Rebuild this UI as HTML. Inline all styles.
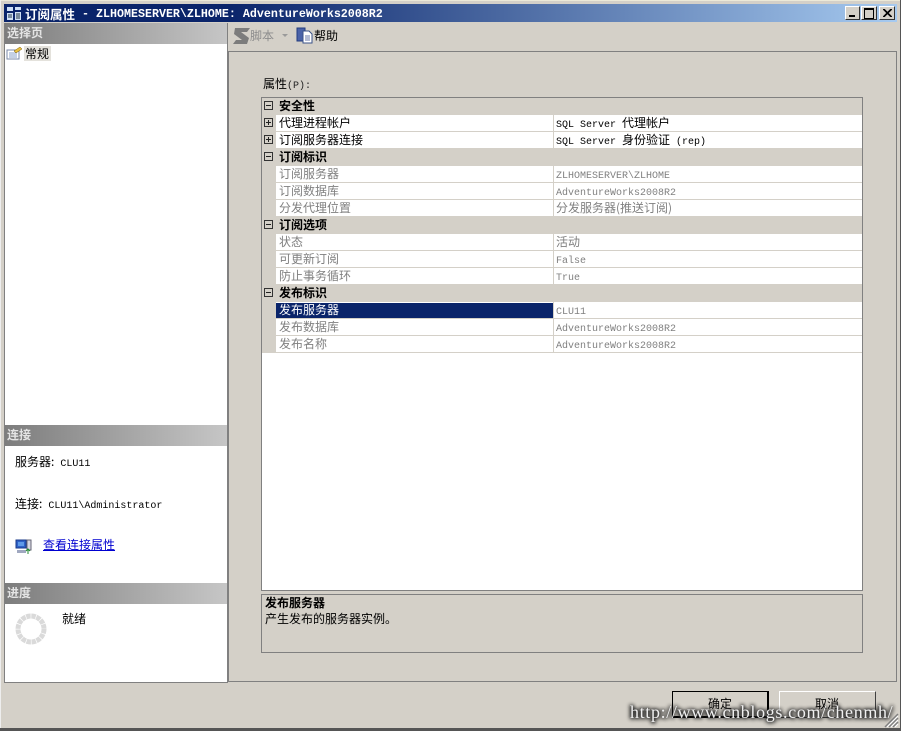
<!DOCTYPE html>
<html><head><meta charset="utf-8">
<style>
html,body{margin:0;padding:0}
body{width:901px;height:731px;position:relative;overflow:hidden;background:#d4d0c8;font:12px/14px "WenQuanYi Zen Hei","Noto Sans CJK SC",sans-serif;color:#000}
div,span.a,a.a{position:absolute;white-space:nowrap}
i{font:normal 10px/14px "Liberation Mono",monospace;white-space:pre}
.hd{left:5px;width:222px;height:21px;background:linear-gradient(90deg,#7d7d7d,#c6c6c6);color:#e4e4e4;font-weight:bold;line-height:20px;padding-left:2px;box-sizing:border-box}
.sec{left:262px;width:600px;height:17px;background:#d4d0c8;font-weight:bold;line-height:16px;padding-left:17px;box-sizing:border-box}
.row{left:262px;width:600px;height:17px;background:#fff}
.gut{left:0;top:0;width:14px;height:17px;background:#d4d0c8}
.n{left:17px;top:0;line-height:16px}
.v{left:294px;top:0;line-height:16px}
.hl{left:14px;top:16px;width:586px;height:1px;background:#d4d0c8}
.vl{left:291px;top:0;width:1px;height:17px;background:#d4d0c8}
.g{color:#808080}
.box{left:2px;top:3px;width:7px;height:7px;border:1px solid #333;box-sizing:content-box;background:transparent}
.box:before{content:"";position:absolute;left:1px;top:3px;width:5px;height:1px;background:#222}
.plus:after{content:"";position:absolute;left:3px;top:1px;width:1px;height:5px;background:#222}
</style></head><body>
<!-- window frame -->
<div style="left:0;top:0;width:901px;height:1px;background:#ece9d8"></div>
<div style="left:0;top:0;width:1px;height:731px;background:#eee"></div>
<div style="left:900px;top:0;width:1px;height:731px;background:#555"></div>
<div style="left:0;top:728px;width:901px;height:3px;background:#555"></div>
<!-- title bar -->
<div style="left:4px;top:4px;width:893px;height:18px;background:linear-gradient(90deg,#0a246a 0,#0a246a 25%,#a6caf0 100%)"></div>
<svg style="position:absolute;left:6px;top:6px" width="16" height="15"><path d="M1 1h6v4H1zM9 1h6v3H9zM1 7h6v7H1zM9 6h6v8H9z" fill="#cfe0f5"/><path d="M2 9h4M2 11h4M10 8h4M10 10h4M10 12h4" stroke="#234" stroke-width="1"/></svg>
<div style="left:25px;top:7px;color:#fff;font-weight:bold;font-size:12.5px;line-height:14px">订阅属性</div>
<div style="left:82px;top:7px;color:#fff;font:bold 11.67px/14px 'Liberation Mono',monospace">- ZLHOMESERVER\ZLHOME: AdventureWorks2008R2</div>
<div style="left:845px;top:6px;width:15px;height:14px;background:#d4d0c8;border:1px solid;border-color:#fff #333 #333 #fff;box-sizing:border-box"><div style="left:3px;top:8px;width:6px;height:2px;background:#000"></div></div>
<div style="left:861px;top:6px;width:16px;height:14px;background:#d4d0c8;border:1px solid;border-color:#fff #333 #333 #fff;box-sizing:border-box"><div style="left:2px;top:1px;width:8px;height:8px;border:1px solid #000;border-top-width:2px"></div></div>
<div style="left:879px;top:6px;width:16px;height:14px;background:#d4d0c8;border:1px solid;border-color:#fff #333 #333 #fff;box-sizing:border-box"><svg style="position:absolute;left:3px;top:2px" width="9" height="8"><path d="M0 0l8 8M1 0l8 8M8 0L0 8M9 0L1 8" stroke="#000" stroke-width="1"/></svg></div>

<!-- left panel -->
<div style="left:4px;top:23px;width:224px;height:660px;background:#fff;border:solid #808080;border-width:0 1px 1px 1px;box-sizing:border-box"></div>
<div class="hd" style="top:23px">选择页</div>
<svg style="position:absolute;left:6px;top:46px" width="17" height="14"><rect x="1" y="4" width="12" height="9" fill="#fff" stroke="#7a8aa8"/><path d="M3 7h8M3 9h8M3 11h8" stroke="#8aa0c8"/><path d="M8 5l6-4 2 2-6 4z" fill="#e8c040" stroke="#806010" stroke-width=".5"/></svg>
<div style="left:24px;top:46px;width:27px;height:15px;background:#e4e2dc;line-height:15px;padding-left:1px;box-sizing:border-box">常规</div>

<div class="hd" style="top:425px">连接</div>
<div style="left:15px;top:455px">服务器:<i> CLU11</i></div>
<div style="left:15px;top:497px">连接:<i> CLU11\Administrator</i></div>
<svg style="position:absolute;left:15px;top:539px" width="18" height="16"><rect x="1" y="1" width="10" height="8" fill="#2f62c8" stroke="#1a3a8a"/><rect x="3" y="3" width="6" height="4" fill="#5f9ae8"/><rect x="12" y="1" width="4" height="10" fill="#d8d8e0" stroke="#667"/><path d="M2 11h9v3H2z" fill="#a0a8c0"/><path d="M13 15v-5M11 12l2-2 2 2" stroke="#208a30" fill="none"/></svg>
<a class="a" style="left:43px;top:538px;color:#0000d0;text-decoration:underline">查看连接属性</a>

<div class="hd" style="top:583px">进度</div>
<svg style="position:absolute;left:14px;top:612px" width="34" height="34"><circle cx="17" cy="17" r="13" fill="none" stroke="#dadada" stroke-width="5" stroke-dasharray="4.4 .7"/></svg>
<div style="left:62px;top:612px">就绪</div>

<!-- toolbar -->
<svg style="position:absolute;left:233px;top:27px" width="18" height="18"><path d="M2 1h15l-3 4H8l8 6-2 6H0l3-4h6L1 7z" fill="#7c7c7c"/></svg>
<div style="left:250px;top:29px;color:#8d8d8d">脚本</div>
<svg style="position:absolute;left:282px;top:34px" width="7" height="4"><path d="M0 0h6L3 3z" fill="#9a9a9a"/></svg>
<svg style="position:absolute;left:296px;top:27px" width="17" height="17"><rect x="1" y="1" width="8" height="13" fill="#4a62a8" stroke="#223c80"/><path d="M7 4h6l3 3v9H7z" fill="#fff" stroke="#3a5288"/><path d="M9 9h5M9 11h5M9 13h5" stroke="#6878a8"/></svg>
<div style="left:314px;top:29px">帮助</div>

<!-- right panel -->
<div style="left:228px;top:51px;width:669px;height:631px;border:1px solid #808080;box-sizing:border-box;background:#d4d0c8"></div>
<div style="left:263px;top:77px">属性<i style="color:#222">(P):</i></div>

<!-- grid -->
<div style="left:261px;top:97px;width:602px;height:494px;background:#fff;border:1px solid #808080;box-sizing:border-box"></div>

<div class="sec" style="top:98px">安全性<div class="box"></div></div>
<div class="row" style="top:115px"><div class="gut"><div class="box plus"></div></div><div class="n">代理进程帐户</div><div class="v"><i>SQL Server </i>代理帐户</div><div class="hl"></div><div class="vl"></div></div>
<div class="row" style="top:132px"><div class="gut"><div class="box plus"></div></div><div class="n">订阅服务器连接</div><div class="v"><i>SQL Server </i>身份验证<i> (rep)</i></div><div class="hl"></div><div class="vl"></div></div>
<div class="sec" style="top:149px">订阅标识<div class="box"></div></div>
<div class="row g" style="top:166px"><div class="gut"></div><div class="n">订阅服务器</div><div class="v"><i>ZLHOMESERVER\ZLHOME</i></div><div class="hl"></div><div class="vl"></div></div>
<div class="row g" style="top:183px"><div class="gut"></div><div class="n">订阅数据库</div><div class="v"><i>AdventureWorks2008R2</i></div><div class="hl"></div><div class="vl"></div></div>
<div class="row g" style="top:200px"><div class="gut"></div><div class="n">分发代理位置</div><div class="v">分发服务器(推送订阅)</div><div class="hl"></div><div class="vl"></div></div>
<div class="sec" style="top:217px">订阅选项<div class="box"></div></div>
<div class="row g" style="top:234px"><div class="gut"></div><div class="n">状态</div><div class="v">活动</div><div class="hl"></div><div class="vl"></div></div>
<div class="row g" style="top:251px"><div class="gut"></div><div class="n">可更新订阅</div><div class="v"><i>False</i></div><div class="hl"></div><div class="vl"></div></div>
<div class="row g" style="top:268px"><div class="gut"></div><div class="n">防止事务循环</div><div class="v"><i>True</i></div><div class="hl"></div><div class="vl"></div></div>
<div class="sec" style="top:285px">发布标识<div class="box"></div></div>
<div class="row g" style="top:302px"><div class="gut"></div><div style="left:14px;top:1px;width:277px;height:15px;background:#0a246a"></div><div class="n" style="color:#fff">发布服务器</div><div class="v"><i>CLU11</i></div><div class="hl"></div><div class="vl"></div></div>
<div class="row g" style="top:319px"><div class="gut"></div><div class="n">发布数据库</div><div class="v"><i>AdventureWorks2008R2</i></div><div class="hl"></div><div class="vl"></div></div>
<div class="row g" style="top:336px"><div class="gut"></div><div class="n">发布名称</div><div class="v"><i>AdventureWorks2008R2</i></div><div class="hl"></div><div class="vl"></div></div>

<!-- description -->
<div style="left:261px;top:594px;width:602px;height:59px;border:1px solid #808080;box-sizing:border-box;background:#d4d0c8"></div>
<div style="left:265px;top:596px;font-weight:bold">发布服务器</div>
<div style="left:265px;top:612px">产生发布的服务器实例。</div>

<!-- buttons -->
<div style="left:672px;top:691px;width:97px;height:27px;background:#d4d0c8;border:1px solid #000;border-right-width:2px;border-bottom-width:2px;box-sizing:border-box"></div>
<div style="left:708px;top:697px">确定</div>
<div style="left:779px;top:691px;width:97px;height:27px;background:#d4d0c8;border:1px solid;border-color:#fff #404040 #404040 #fff;box-sizing:border-box"></div>
<div style="left:815px;top:697px">取消</div>

<!-- grip -->
<svg style="position:absolute;left:884px;top:713px" width="15" height="15"><path d="M14 1L1 14M14 5L5 14M14 9L9 14" stroke="#808080" stroke-width="1.5"/><path d="M14 3L3 14M14 7L7 14M14 11L11 14" stroke="#fff"/></svg>

<!-- watermark -->
<div style="left:630px;top:702px;font:18px/20px 'Liberation Serif',serif;color:#f0f0f0;letter-spacing:.65px;text-shadow:0 0 3px #222,0 0 4px #222,1px 1px 4px #222,-1px 0 4px #222">http://www.cnblogs.com/chenmh/</div>
</body></html>
